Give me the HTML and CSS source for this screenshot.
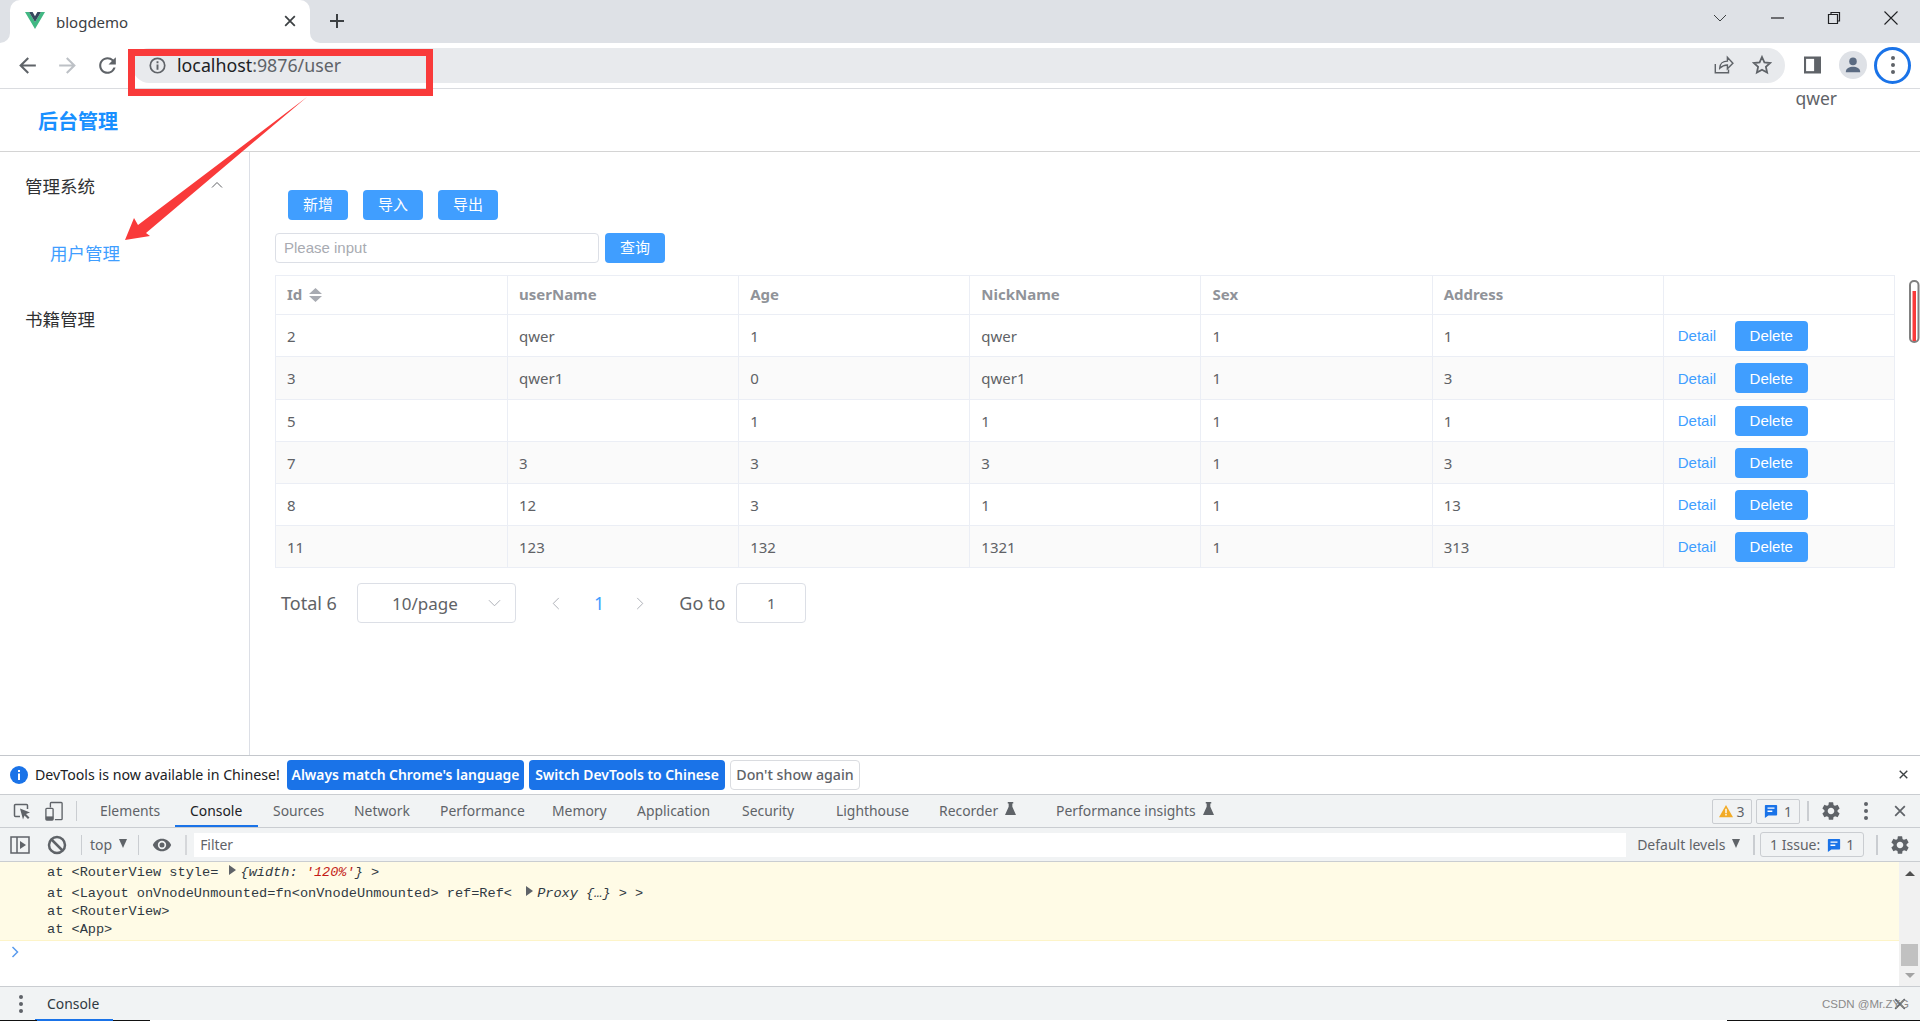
FILE: index.html
```
<!DOCTYPE html>
<html lang="zh-CN">
<head>
<meta charset="utf-8">
<title>blogdemo</title>
<link rel="stylesheet" href="styles.css">
</head>
<body>
<svg class="defs" aria-hidden="true">
  <defs>
    <symbol id="gear" viewBox="0 0 24 24"><path d="M19.14 12.94c.04-.3.06-.61.06-.94 0-.32-.02-.64-.07-.94l2.03-1.58a.49.49 0 0 0 .12-.61l-1.92-3.32a.488.488 0 0 0-.59-.22l-2.39.96c-.5-.38-1.03-.7-1.62-.94l-.36-2.54a.484.484 0 0 0-.48-.41h-3.84c-.24 0-.43.17-.47.41l-.36 2.54c-.59.24-1.13.57-1.62.94l-2.39-.96c-.22-.08-.47 0-.59.22L2.74 8.87c-.12.21-.08.47.12.61l2.03 1.58c-.05.3-.09.63-.09.94s.02.64.07.94l-2.03 1.58a.49.49 0 0 0-.12.61l1.92 3.32c.12.22.37.29.59.22l2.39-.96c.5.38 1.03.7 1.62.94l.36 2.54c.05.24.24.41.48.41h3.84c.24 0 .44-.17.47-.41l.36-2.54c.59-.24 1.13-.56 1.62-.94l2.39.96c.22.08.47 0 .59-.22l1.92-3.32c.12-.22.07-.47-.12-.61l-2.01-1.58zM12 15.6c-1.98 0-3.6-1.62-3.6-3.6s1.62-3.6 3.6-3.6 3.6 1.62 3.6 3.6-1.62 3.6-3.6 3.6z"/></symbol>
    <symbol id="msg" viewBox="0 0 16 16"><path fill="#1a73e8" d="M2 1h12a1 1 0 0 1 1 1v10a1 1 0 0 1-1 1H5l-4 3V2a1 1 0 0 1 1-1z"/><path fill="#fff" d="M4 4h8v1.5H4zM4 7.5h5.5V9H4z"/></symbol>
    <symbol id="flask" viewBox="0 0 12 14"><path d="M3 0h6v1.5H8V5l4 9H0l4-9V1.5H3z"/></symbol>
    <symbol id="x" viewBox="0 0 16 16"><path d="M2.5 2.5l11 11M13.5 2.5l-11 11" fill="none" stroke="currentColor" stroke-width="2"/></symbol>
  </defs>
</svg>

<div class="browser">
  <div class="tabstrip">
    <div class="strip-left"></div>
    <div class="tab">
      <svg class="favicon" viewBox="0 0 20 17"><path fill="#41b883" d="M0 0h4l6 10 6-10h4L10 17z"/><path fill="#35495e" d="M4 0h3.6L10 4.2 12.4 0H16l-6 10z"/></svg>
      <span class="tab-title">blogdemo</span>
      <svg class="tab-close" viewBox="0 0 16 16"><use href="#x"/></svg>
    </div>
    <div class="strip-right">
      <svg class="newtab" viewBox="0 0 16 16"><path d="M8 1v14M1 8h14" fill="none" stroke="#3c4043" stroke-width="2"/></svg>
      <div class="winctl">
        <svg class="win" viewBox="0 0 16 16"><path d="M2 5l6 6 6-6" fill="none" stroke="#3c4043"/></svg>
        <svg class="win" viewBox="0 0 16 16"><path d="M2 8h13" fill="none" stroke="#202124" stroke-width="1.2"/></svg>
        <svg class="win" viewBox="0 0 16 16"><path d="M2.5 4.5h9v9h-9zM5 4V2.5h8.5V11H12" fill="none" stroke="#202124" stroke-width="1.2"/></svg>
        <svg class="win" viewBox="0 0 16 16"><path d="M1.5 1.5l13 13M14.5 1.5l-13 13" fill="none" stroke="#202124" stroke-width="1.1"/></svg>
      </div>
    </div>
  </div>

  <div class="toolbar">
    <svg class="nav" viewBox="0 0 24 24"><path fill="#5f6368" d="M20 11H7.83l5.59-5.59L12 4l-8 8 8 8 1.41-1.41L7.83 13H20v-2z"/></svg>
    <svg class="nav" viewBox="0 0 24 24"><path fill="#bdc1c6" d="M12 4l-1.41 1.41L16.17 11H4v2h12.17l-5.58 5.59L12 20l8-8z"/></svg>
    <svg class="nav" viewBox="0 0 24 24"><path fill="#5f6368" d="M17.65 6.35A7.958 7.958 0 0 0 12 4c-4.42 0-7.99 3.58-7.99 8s3.57 8 7.99 8c3.73 0 6.84-2.55 7.73-6h-2.08A5.99 5.99 0 0 1 12 18c-3.31 0-6-2.69-6-6s2.69-6 6-6c1.66 0 3.14.69 4.22 1.78L13 11h7V4l-2.35 2.35z"/></svg>
    <div class="omnibox">
      <svg class="info" viewBox="0 0 16 16"><circle cx="8" cy="8" r="6.8" fill="none" stroke="#5f6368" stroke-width="1.6"/><path fill="#5f6368" d="M7.1 7h1.8v5H7.1zM7.1 4h1.8v1.8H7.1z"/></svg>
      <span class="url"><span class="url-host">localhost</span>:9876/user</span>
      <svg class="omni-share" viewBox="0 0 20 20"><path d="M3 9v8h12v-3M7 13c0-4 3-6.500 7-6.500V3l5 5.500-5 5V10c-3 0-5 1-7 3z" fill="none" stroke="#5f6368" stroke-width="1.3"/></svg>
      <svg class="omni-star" viewBox="0 0 20 20"><path d="M10 2l2.400 5.400 5.800.6-4.300 3.900 1.200 5.700L10 14.700l-5.100 2.900 1.200-5.700L1.800 8l5.800-.6z" fill="none" stroke="#5f6368" stroke-width="1.800"/></svg>
    </div>
    <svg class="sidepanel" viewBox="0 0 18 18"><rect width="18" height="18" fill="#5f6368"/><rect x="2.200" y="2.500" width="8.500" height="13" fill="#fff"/></svg>
    <div class="avatar"><svg class="avatar-icon" viewBox="0 0 20 20"><circle cx="10" cy="6" r="4.200" fill="#5b6b82"/><path fill="#5b6b82" d="M2 18c0-4.500 4-6 8-6s8 1.500 8 6z"/></svg></div>
    <div class="menu-ring"><span class="dot"></span><span class="dot"></span><span class="dot"></span></div>
  </div>

  <div class="page">
    <header class="app-head">
      <div class="brand">后台管理</div>
      <div class="user">qwer</div>
    </header>
    <div class="app-body">
      <aside class="side">
        <div class="menu-title">管理系统
          <svg class="menu-chev" viewBox="0 0 12 8"><path d="M1 6.500l5-5 5 5" fill="none" stroke="#606266"/></svg>
        </div>
        <div class="menu-item">用户管理</div>
        <div class="menu-title">书籍管理</div>
      </aside>
      <main class="content">
        <div class="actions">
          <button class="btn">新增</button>
          <button class="btn">导入</button>
          <button class="btn">导出</button>
        </div>
        <div class="search">
          <div class="search-input">Please input</div>
          <button class="btn">查询</button>
        </div>
        <table class="grid">
          <thead>
            <tr>
              <th class="col-id">Id<svg class="sort" viewBox="0 0 13 14"><path fill="#a8abb2" d="M6.500 0L13 6H0zM0 8h13l-6.500 6z"/></svg></th>
              <th>userName</th><th>Age</th><th>NickName</th><th>Sex</th><th>Address</th><th></th>
            </tr>
          </thead>
          <tbody>
            <tr><td>2</td><td>qwer</td><td>1</td><td>qwer</td><td>1</td><td>1</td><td class="ops"><a class="link">Detail</a><button class="del">Delete</button></td></tr>
            <tr class="stripe tall"><td>3</td><td>qwer1</td><td>0</td><td>qwer1</td><td>1</td><td>3</td><td class="ops"><a class="link">Detail</a><button class="del">Delete</button></td></tr>
            <tr><td>5</td><td></td><td>1</td><td>1</td><td>1</td><td>1</td><td class="ops"><a class="link">Detail</a><button class="del">Delete</button></td></tr>
            <tr class="stripe"><td>7</td><td>3</td><td>3</td><td>3</td><td>1</td><td>3</td><td class="ops"><a class="link">Detail</a><button class="del">Delete</button></td></tr>
            <tr><td>8</td><td>12</td><td>3</td><td>1</td><td>1</td><td>13</td><td class="ops"><a class="link">Detail</a><button class="del">Delete</button></td></tr>
            <tr class="stripe"><td>11</td><td>123</td><td>132</td><td>1321</td><td>1</td><td>313</td><td class="ops"><a class="link">Detail</a><button class="del">Delete</button></td></tr>
          </tbody>
        </table>
        <div class="pager">
          <span class="total">Total 6</span>
          <div class="size-select"><span>10/page</span><svg class="size-chev" viewBox="0 0 14 8"><path d="M1 1l6 6 6-6" fill="none" stroke="#a8abb2"/></svg></div>
          <svg class="pg-arrow prev" viewBox="0 0 8 14"><path d="M7 1L1 7l6 6" fill="none" stroke="#a8abb2"/></svg>
          <span class="pg-num">1</span>
          <svg class="pg-arrow next" viewBox="0 0 8 14"><path d="M1 1l6 6-6 6" fill="none" stroke="#a8abb2"/></svg>
          <span class="goto">Go to</span>
          <div class="goto-input">1</div>
        </div>
      </main>
    </div>
  </div>

  <section class="devtools">
    <div class="infobar">
      <svg class="ib-icon" viewBox="0 0 18 18"><circle cx="9" cy="9" r="9" fill="#1a73e8"/><path fill="#fff" d="M8 7.500h2V14H8zM8 4h2v2H8z"/></svg>
      <span class="ib-text">DevTools is now available in Chinese!</span>
      <button class="ib-btn primary b1">Always match Chrome's language</button>
      <button class="ib-btn primary b2">Switch DevTools to Chinese</button>
      <button class="ib-btn b3">Don't show again</button>
      <svg class="ib-close" viewBox="0 0 16 16"><use href="#x"/></svg>
    </div>
    <div class="dt-tabs">
      <svg class="dt-ico first" viewBox="0 0 18 18"><path d="M7 14.500H2.500a1 1 0 0 1-1-1v-10a1 1 0 0 1 1-1h11a1 1 0 0 1 1 1V7" fill="none" stroke="#5f6368" stroke-width="1.500"/><path fill="#5f6368" d="M7 6.500l10 4-4 1.500 3.500 3.500-1.500 1.500-3.500-3.500-1.500 4z"/></svg>
      <svg class="dt-ico" viewBox="0 0 20 22"><path d="M6 7V2.500a1 1 0 0 1 1-1h11a1 1 0 0 1 1 1v17a1 1 0 0 1-1 1h-7" fill="none" stroke="#5f6368" stroke-width="1.500"/><rect x="1" y="8" width="8" height="13" rx="1" fill="none" stroke="#5f6368" stroke-width="1.500"/><rect x="1" y="17" width="8" height="4" fill="#5f6368"/></svg>
      <span class="dt-divider"></span>
      <div class="dt-tab w-el">Elements</div>
      <div class="dt-tab w-con active">Console</div>
      <div class="dt-tab w-src">Sources</div>
      <div class="dt-tab w-net">Network</div>
      <div class="dt-tab w-perf">Performance</div>
      <div class="dt-tab w-mem">Memory</div>
      <div class="dt-tab w-app">Application</div>
      <div class="dt-tab w-sec">Security</div>
      <div class="dt-tab w-lh">Lighthouse</div>
      <div class="dt-tab w-rec">Recorder<svg class="flask" viewBox="0 0 12 14"><use href="#flask"/></svg></div>
      <div class="dt-tab w-pi">Performance insights<svg class="flask" viewBox="0 0 12 14"><use href="#flask"/></svg></div>
      <div class="dt-right">
        <div class="count warn"><svg class="count-ico" viewBox="0 0 16 16"><path fill="#f2ab26" d="M8 1l8 14H0z"/><path fill="#fff" d="M7.200 5.500h1.600v5H7.200zM7.200 11.500h1.600v1.600H7.200z"/></svg>3</div>
        <div class="count msgc"><svg class="count-ico" viewBox="0 0 16 16"><use href="#msg"/></svg>1</div>
        <span class="dt-divider thick"></span>
        <svg class="dt-gear" viewBox="0 0 24 24"><use href="#gear"/></svg>
        <div class="vdots"><span class="vdot"></span><span class="vdot"></span><span class="vdot"></span></div>
        <svg class="dt-x" viewBox="0 0 16 16"><use href="#x"/></svg>
      </div>
    </div>
    <div class="dt-filter">
      <svg class="dt-ico first2" viewBox="0 0 20 20"><path d="M1 2h18v16H1zM7 2v16" fill="none" stroke="#5f6368" stroke-width="1.500"/><path fill="#5f6368" d="M10 6l6 4-6 4z"/></svg>
      <svg class="dt-ico block" viewBox="0 0 20 20"><circle cx="10" cy="10" r="8" fill="none" stroke="#5f6368" stroke-width="2.500"/><path d="M4.500 4.500l11 11" stroke="#5f6368" stroke-width="2.500"/></svg>
      <span class="dt-divider d2"></span>
      <span class="ctx">top</span>
      <span class="tri"></span>
      <span class="dt-divider d3"></span>
      <svg class="eye" viewBox="0 0 24 24"><path fill="#5f6368" d="M12 4.500C7 4.500 2.730 7.610 1 12c1.730 4.390 6 7.500 11 7.500s9.270-3.110 11-7.500c-1.730-4.390-6-7.500-11-7.500zM12 17a5 5 0 1 1 0-10 5 5 0 0 1 0 10zm0-8a3 3 0 1 0 0 6 3 3 0 0 0 0-6z"/></svg>
      <span class="dt-divider thick d4"></span>
      <div class="filter-input">Filter</div>
      <span class="levels">Default levels</span>
      <span class="tri t2"></span>
      <span class="dt-divider thick d5"></span>
      <div class="issues">1 Issue:<svg class="count-ico i2" viewBox="0 0 16 16"><use href="#msg"/></svg>1</div>
      <span class="dt-divider thick d6"></span>
      <svg class="dt-gear g2" viewBox="0 0 24 24"><use href="#gear"/></svg>
    </div>
    <div class="console">
      <div class="log">
        <div class="warnblock">
          <div class="line l1">at &lt;RouterView style= <span class="expand"></span><i>{width: <span class="str">'120%'</span>}</i> &gt;</div>
          <div class="line l2">at &lt;Layout onVnodeUnmounted=fn&lt;onVnodeUnmounted&gt; ref=Ref&lt; <span class="expand e2"></span><i>Proxy {…}</i> &gt; &gt;</div>
          <div class="line">at &lt;RouterView&gt;</div>
          <div class="line">at &lt;App&gt;</div>
        </div>
        <svg class="prompt" viewBox="0 0 8 12"><path d="M1.500 1l5 5-5 5" fill="none" stroke="#5a9bee" stroke-width="1.500"/></svg>
      </div>
      <div class="vscroll">
        <span class="sb-up"></span>
        <span class="sb-thumb"></span>
        <span class="sb-down"></span>
      </div>
    </div>
    <div class="drawer">
      <div class="vdots dr"><span class="vdot"></span><span class="vdot"></span><span class="vdot"></span></div>
      <div class="drawer-tab">Console</div>
      <svg class="dt-x dr-x" viewBox="0 0 16 16"><use href="#x"/></svg>
      <span class="watermark">CSDN @Mr.ZYG</span>
    </div>
    <div class="under"><span class="u a"></span><span class="u b"></span><span class="u a2"></span><span class="u w"></span><span class="u c"></span></div>
  </section>

  <svg class="annot" viewBox="0 0 1920 1021" aria-hidden="true">
    <rect x="131.500" y="52.500" width="298" height="40" fill="none" stroke="#f93a3a" stroke-width="7"/>
    <path fill="#f93a3a" d="M307 97 L146 233 L150 236 L125 240 L134 218 L138 225 Z"/>
    <rect x="1910" y="281" width="8.500" height="61" rx="4" fill="#fff" stroke="#808080" stroke-width="2"/>
    <rect x="1912.500" y="291" width="3.500" height="50" fill="#f93a3a"/>
  </svg>
</div>
</body>
</html>
```
FILE: styles.css
```
* { box-sizing: border-box; }
html, body { margin: 0; padding: 0; height: 100%; overflow: hidden; }
body { font-family: "Noto Sans", "Noto Sans CJK SC", sans-serif; background: #fff; color: #606266; }
.defs { position: absolute; width: 0; height: 0; }
button { font-family: inherit; border: 0; padding: 0; cursor: pointer; }

.browser { position: relative; display: flex; flex-direction: column; width: 1920px; height: 1021px; overflow: hidden; }

/* tab strip */
.tabstrip { display: flex; height: 43px; flex: none; background: linear-gradient(#dee1e6 50%, #fff 50%); }
.strip-left { width: 10px; background: #dee1e6; border-bottom-right-radius: 10px; }
.tab { width: 300px; display: flex; align-items: center; background: #fff; border-radius: 10px 10px 0 0; padding: 1px 13px 0 15px; }
.favicon { width: 20px; height: 17px; margin-right: 11px; margin-top: -3px; }
.tab-title { font-size: 15px; color: #3c4043; flex: 1; }
.tab-close { width: 14px; height: 14px; color: #3c4043; margin-top: -2px; }
.strip-right { flex: 1; display: flex; align-items: center; background: #dee1e6; border-bottom-left-radius: 10px; }
.newtab { width: 16px; height: 16px; margin-left: 19px; margin-top: -1px; }
.winctl { margin-left: auto; display: flex; gap: 41px; padding-right: 21px; margin-top: -7px; }
.win { width: 16px; height: 16px; }

/* toolbar */
.toolbar { height: 46px; flex: none; display: flex; align-items: center; border-bottom: 1px solid #dadce0; padding: 0 0 1px 15px; background: #fff; }
.nav { width: 25px; height: 25px; margin-right: 15px; }
.nav:nth-of-type(3) { margin-right: 12px; }
.omnibox { width: 1653px; height: 35px; background: #e8eaed; border-radius: 18px; display: flex; align-items: center; padding-left: 17px; }
.info { width: 17px; height: 17px; margin-right: 11px; }
.url { font-size: 17.800px; color: #5f6368; }
.url-host { color: #202124; }
.omni-share { width: 22px; height: 22px; margin-left: auto; }
.omni-star { width: 20px; height: 20px; margin-left: 18px; margin-right: 13px; }
.sidepanel { width: 17px; height: 18px; margin-left: 19px; }
.avatar { width: 28px; height: 28px; border-radius: 50%; background: #dee1e6; margin-left: 18px; display: flex; align-items: center; justify-content: center; }
.avatar-icon { width: 18px; height: 18px; }
.menu-ring { width: 37px; height: 37px; border: 3px solid #1a73e8; border-radius: 50%; margin-left: 7px; display: flex; flex-direction: column; align-items: center; justify-content: center; gap: 3px; }
.dot { width: 4px; height: 4px; border-radius: 50%; background: #5f6368; }

/* page */
.page { flex: 1; min-height: 0; display: flex; flex-direction: column; }
.app-head { height: 63px; flex: none; display: flex; justify-content: space-between; align-items: center; border-bottom: 1px solid #d4d4d4; padding: 0 83px 0 38px; }
.brand { font-size: 20px; font-weight: 700; color: #1890ff; }
.user { align-self: flex-start; font-size: 17.500px; line-height: 18px; color: #5f6368; }
.app-body { flex: 1; min-height: 0; display: flex; }
.side { width: 250px; flex: none; border-right: 1px solid #dcdfe6; }
.menu-title { position: relative; height: 70px; line-height: 69px; padding-left: 25px; font-size: 17.500px; color: #303133; }
.menu-chev { position: absolute; left: 211px; top: 29px; width: 12px; height: 8px; }
.menu-item { height: 63px; line-height: 63px; padding-left: 50px; font-size: 17.500px; color: #409eff; }

.content { flex: 1; min-width: 0; padding: 38px 25px 0; }
.actions { display: flex; gap: 15px; margin-left: 13px; }
.btn { width: 60px; height: 30px; background: #409eff; color: #fff; font-size: 15px; border-radius: 4px; line-height: 28px; padding-bottom: 2px; }
.search { display: flex; gap: 6px; margin-top: 13px; }
.search-input { width: 324px; height: 30px; border: 1px solid #dcdfe6; border-radius: 4px; font-family: "Liberation Sans", sans-serif; font-size: 15px; line-height: 28px; padding-left: 8px; color: #a8abb2; }

.grid { width: 1620px; margin-top: 12px; border-collapse: collapse; table-layout: fixed; font-size: 15px; }
.grid th, .grid td { border: 1px solid #ebeef5; text-align: left; padding: 0 0 0 11px; color: #606266; font-weight: 400; }
.grid th { height: 39px; color: #909399; font-weight: 700; padding-bottom: 2px; }
.grid th.col-id { width: 232px; }
.grid td { height: 42px; }
.grid .tall td { height: 43px; }
.grid .stripe td { background: #fafafa; }
.sort { width: 13px; height: 14px; margin-left: 7px; vertical-align: -2px; }
.grid td.ops { padding-left: 14px; font-family: "Liberation Sans", sans-serif; }
.link { color: #409eff; display: inline-block; width: 57px; vertical-align: middle; }
.del { width: 73px; height: 30px; border-radius: 4px; background: #409eff; color: #fff; font-family: "Liberation Sans", sans-serif; font-size: 15px; vertical-align: middle; }

.pager { display: flex; align-items: center; margin-top: 15px; padding-left: 6px; height: 40px; }
.total { font-size: 18px; width: 76px; }
.size-select { width: 159px; height: 40px; border: 1px solid #dcdfe6; border-radius: 4px; display: flex; align-items: center; font-size: 17px; padding-left: 34px; }
.size-chev { width: 13px; height: 8px; margin-left: auto; margin-right: 14px; }
.pg-arrow { width: 8px; height: 13px; }
.prev { margin-left: 36px; }
.pg-num { font-size: 18px; color: #409eff; margin-left: 34px; }
.next { margin-left: 32px; }
.goto { font-size: 18px; margin-left: 35px; width: 57px; white-space: nowrap; }
.goto-input { width: 70px; height: 40px; border: 1px solid #dcdfe6; border-radius: 4px; text-align: center; line-height: 38px; font-size: 15px; }

/* devtools */
.devtools { flex: none; border-top: 1px solid #c4c7cc; font-size: 13.900px; color: #5f6368; }
.infobar { height: 39px; display: flex; align-items: center; border-bottom: 1px solid #cacdd1; padding: 0 0 1px 10px; background: #fff; position: relative; }
.ib-icon { width: 18px; height: 18px; margin-right: 7px; }
.ib-text { width: 252px; color: #202124; white-space: nowrap; font-size: 14.200px; }
.ib-btn { height: 30px; border-radius: 4px; font-weight: 600; white-space: nowrap; }
.primary { background: #1a73e8; color: #fff; font-size: 13.900px; }
.b1 { width: 237px; }
.b2 { width: 196px; margin-left: 5px; }
.b3 { width: 130px; margin-left: 5px; background: #fff; border: 1px solid #dadce0; color: #5f6368; font-size: 14.200px; font-weight: 500; }
.ib-close { width: 11px; height: 11px; color: #3c4043; margin-left: auto; margin-right: 11px; }

.dt-tabs { height: 33px; display: flex; align-items: center; background: #f1f3f4; border-bottom: 1px solid #cacdd1; }
.dt-ico { width: 18px; height: 20px; margin-left: 14px; }
.dt-ico.first { margin-left: 13px; }
.dt-divider { width: 1px; height: 20px; background: #cacdd1; margin-left: 13px; flex: none; }
.dt-divider.thick { width: 2px; }
.dt-tab { height: 32px; line-height: 32px; padding-left: 15px; white-space: nowrap; flex: none; }
.dt-tab.active { color: #202124; box-shadow: inset 0 -2px 0 #1a73e8; }
.w-el { width: 90px; margin-left: 8px; }
.w-con { width: 83px; }
.w-src { width: 81px; }
.w-net { width: 86px; }
.w-perf { width: 112px; }
.w-mem { width: 85px; }
.w-app { width: 105px; }
.w-sec { width: 94px; }
.w-lh { width: 103px; }
.w-rec { width: 117px; }
.w-pi { width: 220px; }
.flask { width: 11px; height: 13px; margin-left: 7px; fill: #5f6368; vertical-align: 1px; }
.dt-right { margin-left: auto; display: flex; align-items: center; }
.count { height: 25px; border: 1px solid #cacdd1; border-radius: 2px; display: flex; align-items: center; justify-content: center; gap: 3px; font-size: 14px; }
.warn { width: 40px; }
.msgc { width: 44px; margin-left: 4px; gap: 6px; }
.count-ico { width: 14px; height: 14px; }
.dt-right .thick { margin-left: 7px; }
.dt-gear { width: 22px; height: 22px; fill: #5f6368; margin-left: 11px; }
.vdots { display: flex; flex-direction: column; gap: 3px; margin-left: 22px; }
.vdot { width: 4px; height: 4px; border-radius: 50%; background: #5f6368; }
.dt-x { width: 14px; height: 14px; color: #5f6368; margin-left: 25px; margin-right: 13px; }

.dt-filter { height: 34px; display: flex; align-items: center; background: #f1f3f4; border-bottom: 1px solid #cacdd1; }
.first2 { margin-left: 10px; width: 20px; height: 20px; }
.block { margin-left: 17px; width: 20px; height: 20px; }
.d2 { margin-left: 14px; }
.ctx { margin-left: 8px; font-size: 14px; }
.tri { width: 0; height: 0; border-left: 4.500px solid transparent; border-right: 4.500px solid transparent; border-top: 9px solid #5f6368; margin-left: 7px; margin-top: -3px; }
.d3 { margin-left: 11px; }
.eye { width: 20px; height: 20px; margin-left: 13px; }
.d4 { margin-left: 13px; background: #d5d7da; }
.filter-input { width: 1432px; height: 24px; line-height: 24px; background: #fff; margin-left: 7px; padding-left: 6px; }
.levels { margin-left: 11px; width: 88px; font-size: 14px; white-space: nowrap; }
.t2 { margin-left: 7px; }
.d5 { margin-left: 13px; background: #cacdd1; }
.issues { width: 104px; height: 25px; border: 1px solid #cacdd1; border-radius: 3px; margin-left: 5px; display: flex; align-items: center; justify-content: center; font-size: 14px; }
.i2 { margin: 0 5px 0 7px; }
.d6 { margin-left: 12px; }
.g2 { margin-left: 11px; }

.console { height: 125px; display: flex; border-bottom: 1px solid #cacdd1; }
.log { flex: 1; background: #fff; }
.warnblock { height: 79px; background: #fffbe6; border-bottom: 1px solid #fdf4c8; padding: 0 0 0 47px; font-family: "Liberation Mono", monospace; font-size: 13.600px; color: #303942; }
.line { height: 18px; line-height: 18px; white-space: pre; }
.line.l1 { height: 21px; line-height: 21px; margin-bottom: 2px; }
.warnblock i { font-style: italic; }
.str { color: #c41a16; }
.expand { display: inline-block; width: 0; height: 0; border-left: 7px solid #5f6368; border-top: 5px solid transparent; border-bottom: 5px solid transparent; margin: 0 4px 0 3px; vertical-align: 1px; }
.expand.e2 { margin: 0 4px 0 6px; }
.prompt { display: block; width: 8px; height: 12px; margin: 5px 0 0 11px; }
.vscroll { width: 21px; background: #f1f1f1; position: relative; display: flex; flex-direction: column; align-items: center; }
.sb-up { margin-top: 9px; border-left: 5px solid transparent; border-right: 5px solid transparent; border-bottom: 5px solid #505050; }
.sb-thumb { width: 17px; height: 22px; background: #c1c1c1; margin-top: 68px; }
.sb-down { margin-top: 7px; border-left: 5px solid transparent; border-right: 5px solid transparent; border-top: 5px solid #a3a3a3; }

.drawer { height: 33px; display: flex; align-items: center; background: #f1f3f4; position: relative; }
.vdots.dr { margin-left: 19px; }
.drawer-tab { margin-left: 12px; width: 78px; padding-left: 12px; height: 33px; line-height: 33px; box-shadow: inset 0 -1px 0 #1a73e8; color: #303942; white-space: nowrap; }
.dr-x { margin-left: auto; width: 14px; height: 14px; margin-right: 13px; }
.watermark { position: absolute; left: 1822px; top: 11px; font-family: "Liberation Sans", sans-serif; font-size: 11.500px; color: #8a8a8a; white-space: nowrap; }

.under { height: 1px; display: flex; background: #fff; }
.u { display: block; height: 1px; }
.u.a { width: 37px; background: #111; }
.u.b { width: 76px; background: #1a73e8; }
.u.a2 { width: 37px; background: #111; }
.u.w { flex: 1; background: #fff; }
.u.c { width: 193px; background: #111; }

.annot { position: absolute; left: 0; top: 0; width: 1920px; height: 1021px; pointer-events: none; }
```
